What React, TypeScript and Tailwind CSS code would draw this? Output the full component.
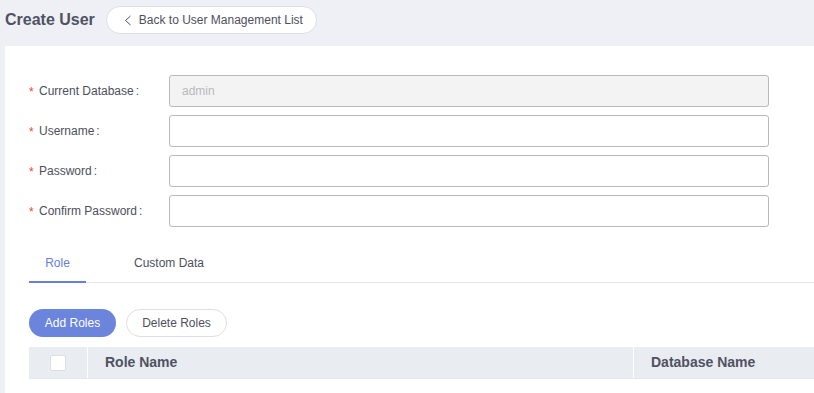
import React from "react";

const Field = ({ label, value, disabled }: { label: string; value?: string; disabled?: boolean }) => (
  <div className="flex items-center h-[32px]">
    <div className="w-[140px] flex items-center text-[12px] text-[#4d4f5c] shrink-0">
      <span className="text-[#f03d3d] w-[10px] text-[12px] leading-none mt-[2px]">*</span>
      <span>{label}</span>
      <span className="ml-[2px]">:</span>
    </div>
    <div
      className={`w-[600px] h-[32px] border border-[#b7b9c3] rounded-[3px] flex items-center px-[12px] text-[12px] ${
        disabled ? "bg-[#f3f3f3] text-[#b9b9b9]" : "bg-white"
      }`}
    >
      {value}
    </div>
  </div>
);

export default function App() {
  return (
    <div
      className="w-[814px] h-[393px] bg-[#eef0f5] overflow-hidden"
      style={{ fontFamily: "'Liberation Sans', Arial, sans-serif" }}
    >
      <div className="h-[46px] flex items-center pl-[5px] pb-[6px]">
        <h1 className="text-[16px] font-bold text-[#4f5263]">Create User</h1>
        <button className="ml-[11px] h-[28px] pl-[17px] pr-[13px] rounded-full bg-white border border-[#dcdfe6] flex items-center gap-[7px] text-[12px] text-[#4d4f5c]">
          <svg width="8" height="11" viewBox="0 0 8 11" fill="none">
            <path d="M6.5 1 L1.5 5.5 L6.5 10" stroke="#4d4f5c" strokeWidth="1" />
          </svg>
          Back to User Management List
        </button>
      </div>
      <div className="ml-[5px] bg-white h-[347px] pl-[24px] pt-[29px]">
        <div className="flex flex-col gap-[8px]">
          <Field label="Current Database" value="admin" disabled />
          <Field label="Username" />
          <Field label="Password" />
          <Field label="Confirm Password" />
        </div>
        <div className="mt-[14px] flex border-b border-[#e4e7ed] h-[42px]">
          <div className="w-[57px] flex items-center justify-center pt-[3px] text-[12px] text-[#6480dc] border-b-2 border-[#6480dc] -mb-px">
            Role
          </div>
          <div className="ml-[48px] flex items-center pt-[3px] text-[12px] text-[#4d4f5c]">
            Custom Data
          </div>
        </div>
        <div className="mt-[26px] flex gap-[10px]">
          <button className="h-[28px] w-[87px] rounded-full bg-[#6b84dc] text-white text-[12px] font-medium">
            Add Roles
          </button>
          <button className="h-[28px] w-[101px] rounded-full bg-white border border-[#dcdfe6] text-[#4d4f5c] text-[12px]">
            Delete Roles
          </button>
        </div>
        <div className="mt-[10px] flex h-[32px] bg-[#e9ecf1] border-b border-[#e4e7ed] text-[14px] font-bold text-[#4f5263]">
          <div className="w-[59px] flex items-center justify-center border-r border-white">
            <div className="w-[16px] h-[16px] bg-white border border-[#dcdfe6] rounded-[2px]" />
          </div>
          <div className="w-[546px] flex items-center pl-[17px] border-r border-white">Role Name</div>
          <div className="flex-1 flex items-center pl-[17px]">Database Name</div>
        </div>
      </div>
    </div>
  );
}
